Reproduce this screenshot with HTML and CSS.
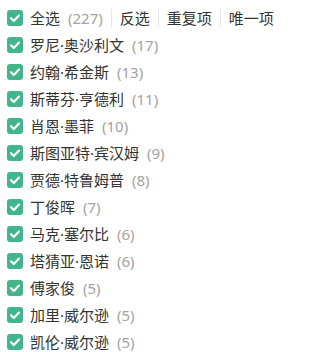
FILE: index.html
```html
<!DOCTYPE html>
<html lang="zh">
<head>
<meta charset="utf-8">
<link rel="stylesheet" href="styles.css">
</head>
<body>
<ul class="list">
  <li class="row head">
    <span class="cb"><svg viewBox="0 0 16 16"><path d="M4 8.2l2.8 2.8L12 5.6"/></svg></span>
    <span class="name">全选</span><span class="count">(227)</span>
    <span class="sep"></span><span class="act">反选</span>
    <span class="sep"></span><span class="act">重复项</span>
    <span class="sep"></span><span class="act">唯一项</span>
  </li>
  <li class="row"><span class="cb"><svg viewBox="0 0 16 16"><path d="M4 8.2l2.8 2.8L12 5.6"/></svg></span><span class="name">罗尼·奥沙利文</span><span class="count">(17)</span></li>
  <li class="row"><span class="cb"><svg viewBox="0 0 16 16"><path d="M4 8.2l2.8 2.8L12 5.6"/></svg></span><span class="name">约翰·希金斯</span><span class="count">(13)</span></li>
  <li class="row"><span class="cb"><svg viewBox="0 0 16 16"><path d="M4 8.2l2.8 2.8L12 5.6"/></svg></span><span class="name">斯蒂芬·亨德利</span><span class="count">(11)</span></li>
  <li class="row"><span class="cb"><svg viewBox="0 0 16 16"><path d="M4 8.2l2.8 2.8L12 5.6"/></svg></span><span class="name">肖恩·墨菲</span><span class="count">(10)</span></li>
  <li class="row"><span class="cb"><svg viewBox="0 0 16 16"><path d="M4 8.2l2.8 2.8L12 5.6"/></svg></span><span class="name">斯图亚特·宾汉姆</span><span class="count">(9)</span></li>
  <li class="row"><span class="cb"><svg viewBox="0 0 16 16"><path d="M4 8.2l2.8 2.8L12 5.6"/></svg></span><span class="name">贾德·特鲁姆普</span><span class="count">(8)</span></li>
  <li class="row"><span class="cb"><svg viewBox="0 0 16 16"><path d="M4 8.2l2.8 2.8L12 5.6"/></svg></span><span class="name">丁俊晖</span><span class="count">(7)</span></li>
  <li class="row"><span class="cb"><svg viewBox="0 0 16 16"><path d="M4 8.2l2.8 2.8L12 5.6"/></svg></span><span class="name">马克·塞尔比</span><span class="count">(6)</span></li>
  <li class="row"><span class="cb"><svg viewBox="0 0 16 16"><path d="M4 8.2l2.8 2.8L12 5.6"/></svg></span><span class="name">塔猜亚·恩诺</span><span class="count">(6)</span></li>
  <li class="row"><span class="cb"><svg viewBox="0 0 16 16"><path d="M4 8.2l2.8 2.8L12 5.6"/></svg></span><span class="name">傅家俊</span><span class="count">(5)</span></li>
  <li class="row"><span class="cb"><svg viewBox="0 0 16 16"><path d="M4 8.2l2.8 2.8L12 5.6"/></svg></span><span class="name">加里·威尔逊</span><span class="count">(5)</span></li>
  <li class="row"><span class="cb"><svg viewBox="0 0 16 16"><path d="M4 8.2l2.8 2.8L12 5.6"/></svg></span><span class="name">凯伦·威尔逊</span><span class="count">(5)</span></li>
</ul>
</body>
</html>
```
FILE: styles.css
```css
html, body {
  margin: 0;
  padding: 0;
  background: #fff;
}
body {
  font-family: "Noto Sans", "Noto Sans CJK SC", sans-serif;
  font-size: 15px;
  color: #333;
}
.list {
  list-style: none;
  margin: 0;
  padding: 4px 0 0 7px;
}
.row {
  display: flex;
  align-items: center;
  height: 27px;
  white-space: nowrap;
}
.cb {
  width: 16px;
  height: 16px;
  border-radius: 3px;
  background: #40b68a;
  flex: none;
  display: flex;
  margin-right: 7px;
}
.cb svg {
  width: 16px;
  height: 16px;
  fill: none;
  stroke: #fff;
  stroke-width: 2.2;
  stroke-linecap: round;
  stroke-linejoin: round;
}
.name {
  line-height: 20px;
}
.count {
  color: #a3a3a3;
  margin-left: 8px;
  line-height: 20px;
}
.sep {
  width: 1px;
  height: 18px;
  background: #e6e6e6;
  margin: 0 8px;
}
.act {
  line-height: 20px;
}
```
